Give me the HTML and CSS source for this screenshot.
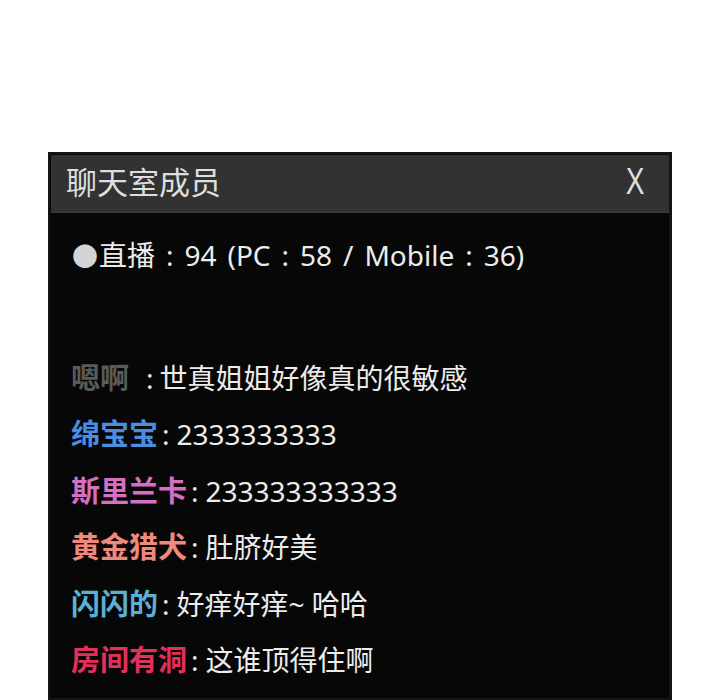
FILE: index.html
```html
<!DOCTYPE html>
<html lang="zh-CN">
<head>
<meta charset="utf-8">
<title>聊天室成员</title>
<link rel="stylesheet" href="styles.css">
</head>
<body>
<div class="top-space"></div>
<section class="panel">
  <header class="panel-head">
    <span class="title">聊天室成员</span>
    <span class="close">X</span>
  </header>
  <div class="panel-body">
    <div class="status"><span class="dot">●</span>直播 : 94 (PC : 58 / Mobile : 36)</div>
    <ul class="chat">
      <li><span class="name n-gray">嗯啊</span><span class="sep wide">:</span>世真姐姐好像真的很敏感</li>
      <li><span class="name n-blue">绵宝宝</span><span class="sep">:</span>2333333333</li>
      <li><span class="name n-pink">斯里兰卡</span><span class="sep">:</span>233333333333</li>
      <li><span class="name n-salmon">黄金猎犬</span><span class="sep">:</span>肚脐好美</li>
      <li><span class="name n-sky">闪闪的</span><span class="sep">:</span>好痒好痒~ 哈哈</li>
      <li><span class="name n-red">房间有洞</span><span class="sep">:</span>这谁顶得住啊</li>
    </ul>
  </div>
</section>
</body>
</html>
```

FILE: styles.css
```css
html, body {
  margin: 0;
  padding: 0;
  background: #ffffff;
}
body {
  font-family: "Noto Sans", "Noto Sans CJK SC", sans-serif;
  color: #ececec;
}
.top-space {
  height: 152px;
}
.panel {
  margin-left: 48px;
  width: 624px;
  height: 548px;
  box-sizing: border-box;
  background: #070707;
  border: 2px solid #151515;
  border-right-width: 3px;
  overflow: hidden;
}
.panel-head {
  display: flex;
  align-items: center;
  justify-content: space-between;
  height: 57px;
  margin: 1px 0 0 1px;
  padding: 0 22px 0 15px;
  background: #323232;
  color: #dedede;
  border-bottom: 1px solid #3a3a3a;
}
.title {
  font-family: "Noto Sans CJK SC", sans-serif;
  font-size: 31px;
  line-height: 1;
  position: relative;
  top: -3px;
}
.close {
  font-family: "Liberation Sans", sans-serif;
  font-size: 36px;
  line-height: 1;
  transform: scaleX(0.78);
  position: relative;
  top: -2px;
}
.panel-body {
  padding: 24px 0 0 21px;
}
.status {
  font-size: 28px;
  line-height: 36px;
  height: 36px;
  color: #ececec;
  padding-left: 1px;
  word-spacing: 3.7px;
}
.dot {
  color: #d4d4d4;
  font-size: 26px;
  margin-right: 1px;
}
.chat {
  list-style: none;
  margin: 75px 0 0 0;
  padding: 0;
}
.chat li {
  font-size: 28px;
  height: 56.4px;
  line-height: 56px;
  white-space: nowrap;
  overflow: hidden;
}
.name {
  font-family: "Noto Sans CJK SC", sans-serif;
  font-weight: 700;
  font-size: 29px;
}
.sep {
  margin: 0 7px 0 4px;
}
.sep.wide {
  margin-left: 17px;
  margin-right: 6px;
}
.n-gray { color: #5a5a5a; }
.n-blue { color: #4a8ee0; }
.n-pink { color: #d46fc4; }
.n-salmon { color: #f0897c; }
.n-sky { color: #5bb0d6; }
.n-red { color: #e3305a; }
```
